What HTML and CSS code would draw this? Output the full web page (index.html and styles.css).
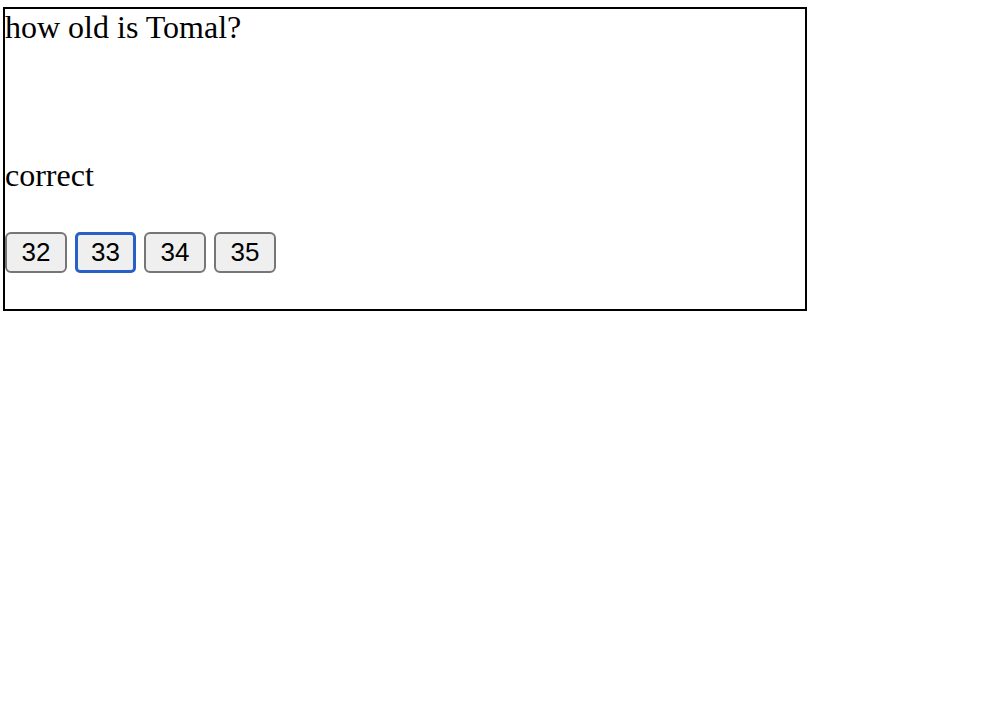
FILE: index.html
```html
<!DOCTYPE html>
<html>
<head>
<meta charset="utf-8">
<link rel="stylesheet" href="styles.css">
</head>
<body>
<div class="quiz">
  <div class="question">how old is Tomal?</div>
  <div class="result">correct</div>
  <div class="answers">
    <button class="answer">32</button>
    <button class="answer answer--focused">33</button>
    <button class="answer">34</button>
    <button class="answer">35</button>
  </div>
</div>
</body>
</html>
```
FILE: styles.css
```css
html, body {
  margin: 0;
  padding: 0;
  background: #fff;
}
body {
  font-family: "Liberation Serif", "Times New Roman", serif;
  color: #000;
}
.quiz {
  margin: 7px 0 0 3px;
  width: 800px;
  height: 300px;
  border: 2px solid #000;
  font-size: 32px;
}
.question {
  line-height: 37px;
}
.result {
  margin-top: 111px;
  line-height: 37px;
}
.answers {
  margin-top: 38px;
  display: flex;
  gap: 8px;
  padding-left: 0;
}
.answer {
  box-sizing: border-box;
  width: 62px;
  height: 41px;
  margin: 0;
  padding: 0;
  font-family: "Liberation Sans", Arial, sans-serif;
  font-size: 26px;
  line-height: 37px;
  color: #000;
  background: #efefef;
  border: 2px solid #767676;
  border-radius: 6px;
}
.answer--focused {
  width: 61px;
  border: 3px solid #2760c6;
  border-radius: 5px;
  line-height: 35px;
}
```
